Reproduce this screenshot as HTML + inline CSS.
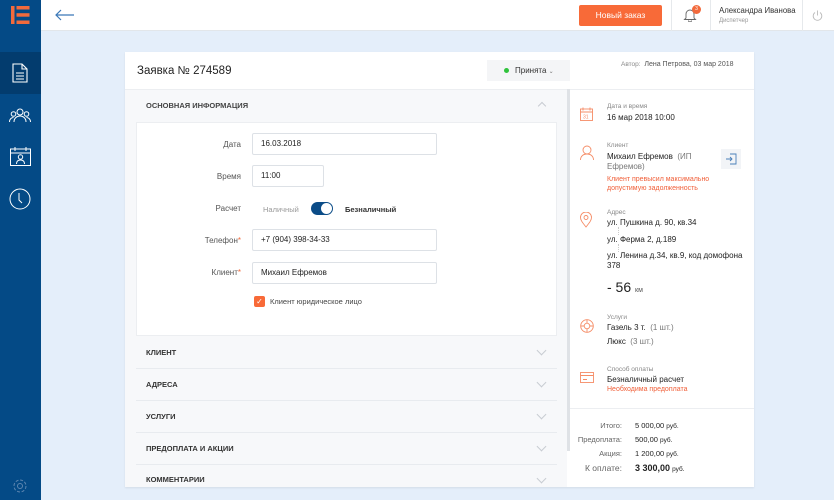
<!DOCTYPE html>
<html><head><meta charset="utf-8"><style>
*{box-sizing:border-box;margin:0;padding:0}
body{width:834px;height:500px;overflow:hidden;font-family:"Liberation Sans",sans-serif;background:#e4eefa;position:relative;color:#333}
.side{position:absolute;left:0;top:0;width:41px;height:500px;background:#044a86}
.top{position:absolute;left:41px;top:0;right:0;height:31px;background:#fff;border-bottom:1px solid #e2e6ea}
.abs{position:absolute}
.card{position:absolute;left:125px;top:52px;width:629px;height:435px;background:#fff;box-shadow:0 1px 2px rgba(0,0,0,.08)}
.lbl{position:absolute;font-size:8px;color:#555;text-align:right;width:100px}
.inp{position:absolute;border:1px solid #dde1e6;border-radius:2px;background:#fff;font-size:8px;color:#222;padding-left:8px;line-height:20px;height:22px}
.acc{position:absolute;left:136px;width:421px;height:32px;border-bottom:1px solid #e8ebef;font-size:7.5px;font-weight:bold;color:#333;line-height:32px;padding-left:10px}
.acc:after{content:"";position:absolute;right:12px;top:10px;width:6px;height:6px;border-right:1px solid #c8ccd2;border-bottom:1px solid #c8ccd2;transform:rotate(45deg)}
.cap{font-size:6.5px;color:#888}
.v{font-size:8px;color:#222}
.red{font-size:7px;color:#f0603a}
.ic{position:absolute;left:580px}
.tl{position:absolute;left:540px;width:82px;text-align:right;font-size:7.5px;color:#666;line-height:10px}
.tv{position:absolute;left:635px;font-size:7.5px;color:#222;line-height:10px}
.tv span{font-size:6.5px}
</style></head><body>
<div class="side">
<svg class="abs" style="left:11px;top:6px" width="20" height="18"><rect x="0" y="0" width="3.5" height="18" fill="#f26a3c"/><rect x="5.5" y="0" width="13" height="3.5" fill="#f26a3c"/><rect x="5.5" y="7.2" width="13" height="3.5" fill="#f26a3c"/><rect x="5.5" y="14.5" width="13" height="3.5" fill="#f26a3c"/></svg>
<div class="abs" style="left:0;top:52px;width:41px;height:42px;background:#033c6e"></div>
<svg class="abs" style="left:12px;top:63px" width="16" height="20" fill="none" stroke="#fff" stroke-width="1.1"><path d="M1 1h9l5 5v13H1z M10 1v5h5 M4 10h8 M4 13h8 M4 16h8"/></svg>
<svg class="abs" style="left:9px;top:108px" width="22" height="16" fill="none" stroke="#fff" stroke-width="1"><circle cx="11" cy="4" r="3"/><circle cx="4.5" cy="6" r="2.3"/><circle cx="17.5" cy="6" r="2.3"/><path d="M5 14c0-4 3-6 6-6s6 2 6 6M0.5 14c0-3 2-4.5 4-4.5M21.5 14c0-3-2-4.5-4-4.5"/></svg>
<svg class="abs" style="left:10px;top:146px" width="21" height="20" fill="none" stroke="#fff" stroke-width="1"><rect x="0.5" y="3" width="20" height="16.5"/><path d="M0.5 7h20M5 1v4M16 1v4"/><circle cx="10.5" cy="11" r="2.2"/><path d="M6.5 18c0-3 2-4 4-4s4 1 4 4"/></svg>
<svg class="abs" style="left:9px;top:188px" width="22" height="22" fill="none" stroke="#fff" stroke-width="1"><circle cx="11" cy="11" r="10"/><path d="M10 5v7l3 3"/></svg>
<svg class="abs" style="left:12px;top:478px" width="16" height="16" fill="none" stroke="#5d86b0" stroke-width="1"><circle cx="8" cy="8" r="2.5"/><circle cx="8" cy="8" r="6" stroke-dasharray="3 1.7"/></svg>
</div>
<div class="top">
<svg class="abs" style="left:14px;top:9px" width="20" height="12" fill="none" stroke="#3a78b8" stroke-width="1.2"><path d="M19 6H1M6 1L1 6l5 5"/></svg>
<div class="abs" style="left:538px;top:5px;width:83px;height:21px;background:#f86a38;border-radius:2px;color:#fff;font-size:8.5px;text-align:center;line-height:21px">Новый заказ</div>
<div class="abs" style="left:630px;top:0;width:1px;height:31px;background:#e6e9ec"></div>
<svg class="abs" style="left:642px;top:8px" width="14" height="14" fill="none" stroke="#666" stroke-width="0.9"><path d="M3 10V6a4 4 0 018 0v4l1.5 1.5h-11zM5.5 12.5a1.5 1.5 0 003 0"/></svg>
<div class="abs" style="left:651px;top:5px;width:9px;height:9px;border-radius:50%;background:#f26a3c;color:#fff;font-size:5px;text-align:center;line-height:9px">3</div>
<div class="abs" style="left:669px;top:0;width:1px;height:31px;background:#e6e9ec"></div>
<div class="abs" style="left:678px;top:6px;font-size:7.8px;color:#333">Александра Иванова</div>
<div class="abs" style="left:678px;top:18px;font-size:6px;color:#999">Диспетчер</div>
<div class="abs" style="left:761px;top:0;width:1px;height:31px;background:#e6e9ec"></div>
<svg class="abs" style="left:771px;top:10px" width="11" height="11" fill="none" stroke="#bbb" stroke-width="0.9"><path d="M3 2.5a4.3 4.3 0 105 0M5.5 0.5v5"/></svg>
</div>
<div class="card">
<div class="abs" style="left:12px;top:13px;font-size:11.5px;color:#222">Заявка № 274589</div>
<div class="abs" style="left:362px;top:8px;width:83px;height:21px;background:#f4f5f7;font-size:8px;line-height:21px;padding-left:28px"><span style="position:absolute;left:17px;top:8px;width:5px;height:5px;border-radius:50%;background:#2fc33c"></span>Принята <span style="font-size:6px;color:#777">&#8964;</span></div>
<div class="abs" style="left:496px;top:9px;font-size:6.5px;color:#888">Автор: <span style="font-size:7px;color:#555">&nbsp;Лена Петрова, 03 мар 2018</span></div>
<div class="abs" style="left:0;top:37px;width:442px;height:398px;background:#f7f8fa;border-top:1px solid #eceef1"></div>
<div class="abs" style="left:442px;top:37px;width:3px;height:362px;background:#dfe2e6"></div>
<div class="abs" style="left:445px;top:37px;width:184px;height:1px;background:#eceef1"></div>
</div>
<div class="abs" style="left:146px;top:101px;font-size:7.5px;font-weight:bold;color:#444">ОСНОВНАЯ ИНФОРМАЦИЯ</div>
<div class="abs" style="left:539px;top:103px;width:6px;height:6px;border-left:1px solid #c8ccd2;border-top:1px solid #c8ccd2;transform:rotate(45deg)"></div>
<div class="abs" style="left:136px;top:122px;width:421px;height:214px;background:#fff;border:1px solid #eceef1"></div>
<div class="lbl" style="left:141px;top:140px">Дата</div>
<div class="inp" style="left:252px;top:133px;width:185px">16.03.2018</div>
<div class="lbl" style="left:141px;top:172px">Время</div>
<div class="inp" style="left:252px;top:165px;width:72px">11:00</div>
<div class="lbl" style="left:141px;top:204px">Расчет</div>
<div class="abs" style="left:263px;top:205px;font-size:7.5px;color:#999">Наличный</div>
<div class="abs" style="left:311px;top:202px;width:22px;height:13px;border-radius:7px;background:#0b4c87"><div style="position:absolute;right:1px;top:1px;width:11px;height:11px;border-radius:50%;background:#fff"></div></div>
<div class="abs" style="left:345px;top:205px;font-size:7.5px;font-weight:bold;color:#333">Безналичный</div>
<div class="lbl" style="left:141px;top:236px">Телефон<span style="color:#f26a3c">*</span></div>
<div class="inp" style="left:252px;top:229px;width:185px">+7 (904) 398-34-33</div>
<div class="lbl" style="left:141px;top:268px">Клиент<span style="color:#f26a3c">*</span></div>
<div class="inp" style="left:252px;top:262px;width:185px">Михаил Ефремов</div>
<div class="abs" style="left:254px;top:296px;width:11px;height:11px;border-radius:2px;background:#f86a38;color:#fff;font-size:8px;line-height:11px;text-align:center">✓</div>
<div class="abs" style="left:270px;top:297px;font-size:7.5px;color:#444">Клиент юридическое лицо</div>
<div class="acc" style="top:337px">КЛИЕНТ</div>
<div class="acc" style="top:369px">АДРЕСА</div>
<div class="acc" style="top:401px">УСЛУГИ</div>
<div class="acc" style="top:433px">ПРЕДОПЛАТА И АКЦИИ</div>
<div class="acc" style="top:465px;border:0;height:22px;line-height:30px">КОММЕНТАРИИ</div>
<svg class="ic" style="top:107px" width="13" height="14" fill="none" stroke="#f58c66" stroke-width="0.9"><rect x="0.5" y="2" width="12" height="11.5"/><path d="M0.5 5h12M3 0.5v3M10 0.5v3"/><text x="3" y="11.5" font-size="5" fill="#f58c66" stroke="none" font-family="Liberation Sans">31</text></svg>
<div class="abs cap" style="left:607px;top:103px">Дата и время</div>
<div class="abs v" style="left:607px;top:113px">16 мар 2018 10:00</div>
<svg class="ic" style="top:145px" width="14" height="15" fill="none" stroke="#f58c66" stroke-width="0.9"><circle cx="7" cy="5" r="4"/><path d="M0.5 15c0-4 3-6 6.5-6s6.5 2 6.5 6"/></svg>
<div class="abs cap" style="left:607px;top:142px">Клиент</div>
<div class="abs v" style="left:607px;top:152px;width:90px;line-height:10px">Михаил Ефремов &nbsp;<span style="color:#777">(ИП Ефремов)</span></div>
<div class="abs red" style="left:607px;top:175px;width:120px;line-height:9px">Клиент превысил максимально допустимую задолженность</div>
<div class="abs" style="left:721px;top:149px;width:20px;height:20px;background:#f2f4f7"></div>
<svg class="abs" style="left:725px;top:153px" width="12" height="12" fill="none" stroke="#4a7fb8" stroke-width="0.9"><path d="M5 1h6v10H5M1 6h6M5 4l2 2-2 2"/></svg>
<svg class="ic" style="top:212px" width="12" height="16" fill="none" stroke="#f58c66" stroke-width="0.9"><path d="M6 15C2 10 .5 8 .5 5.5a5.5 5.5 0 0111 0C11.5 8 10 10 6 15z"/><circle cx="6" cy="5.5" r="2"/></svg>
<div class="abs cap" style="left:607px;top:209px">Адрес</div>
<div class="abs v" style="left:607px;top:218px">ул. Пушкина д. 90, кв.34</div>
<div class="abs" style="left:618px;top:227px;height:8px;border-left:1px dotted #ccc"></div>
<div class="abs v" style="left:607px;top:235px">ул. Ферма 2, д.189</div>
<div class="abs" style="left:618px;top:244px;height:8px;border-left:1px dotted #ccc"></div>
<div class="abs v" style="left:607px;top:251px;width:150px;line-height:10px">ул. Ленина д.34, кв.9, код домофона 378</div>
<div class="abs" style="left:607px;top:279px;font-size:14px;color:#222">- 56 <span style="font-size:7px;color:#555">км</span></div>
<svg class="ic" style="top:319px" width="14" height="14" fill="none" stroke="#f58c66" stroke-width="0.9"><circle cx="7" cy="7" r="6.3"/><circle cx="7" cy="7" r="2.8"/><path d="M7 .7v3.5M7 9.8v3.5M.7 7h3.5M9.8 7h3.5"/></svg>
<div class="abs cap" style="left:607px;top:314px">Услуги</div>
<div class="abs v" style="left:607px;top:323px">Газель 3 т. &nbsp;<span style="color:#777">(1 шт.)</span></div>
<div class="abs v" style="left:607px;top:337px">Люкс &nbsp;<span style="color:#777">(3 шт.)</span></div>
<svg class="ic" style="top:372px" width="14" height="11" fill="none" stroke="#f58c66" stroke-width="0.9"><rect x="0.5" y="0.5" width="13" height="10"/><path d="M0.5 3.5h13M3 7.5h4"/></svg>
<div class="abs cap" style="left:607px;top:366px">Способ оплаты</div>
<div class="abs v" style="left:607px;top:375px">Безналичный расчет</div>
<div class="abs red" style="left:607px;top:386px">Необходима предоплата</div>
<div class="abs" style="left:570px;top:408px;width:184px;height:1px;background:#eceef1"></div>
<div class="tl" style="top:421px">Итого:</div><div class="tv" style="top:421px">5 000,00 <span>руб.</span></div>
<div class="tl" style="top:435px">Предоплата:</div><div class="tv" style="top:435px">500,00 <span>руб.</span></div>
<div class="tl" style="top:449px">Акция:</div><div class="tv" style="top:449px">1 200,00 <span>руб.</span></div>
<div class="tl" style="top:462px;font-size:8.5px;line-height:12px">К оплате:</div><div class="tv" style="top:462px;line-height:12px"><b style="font-size:9px">3 300,00</b> <span>руб.</span></div>
</body></html>
